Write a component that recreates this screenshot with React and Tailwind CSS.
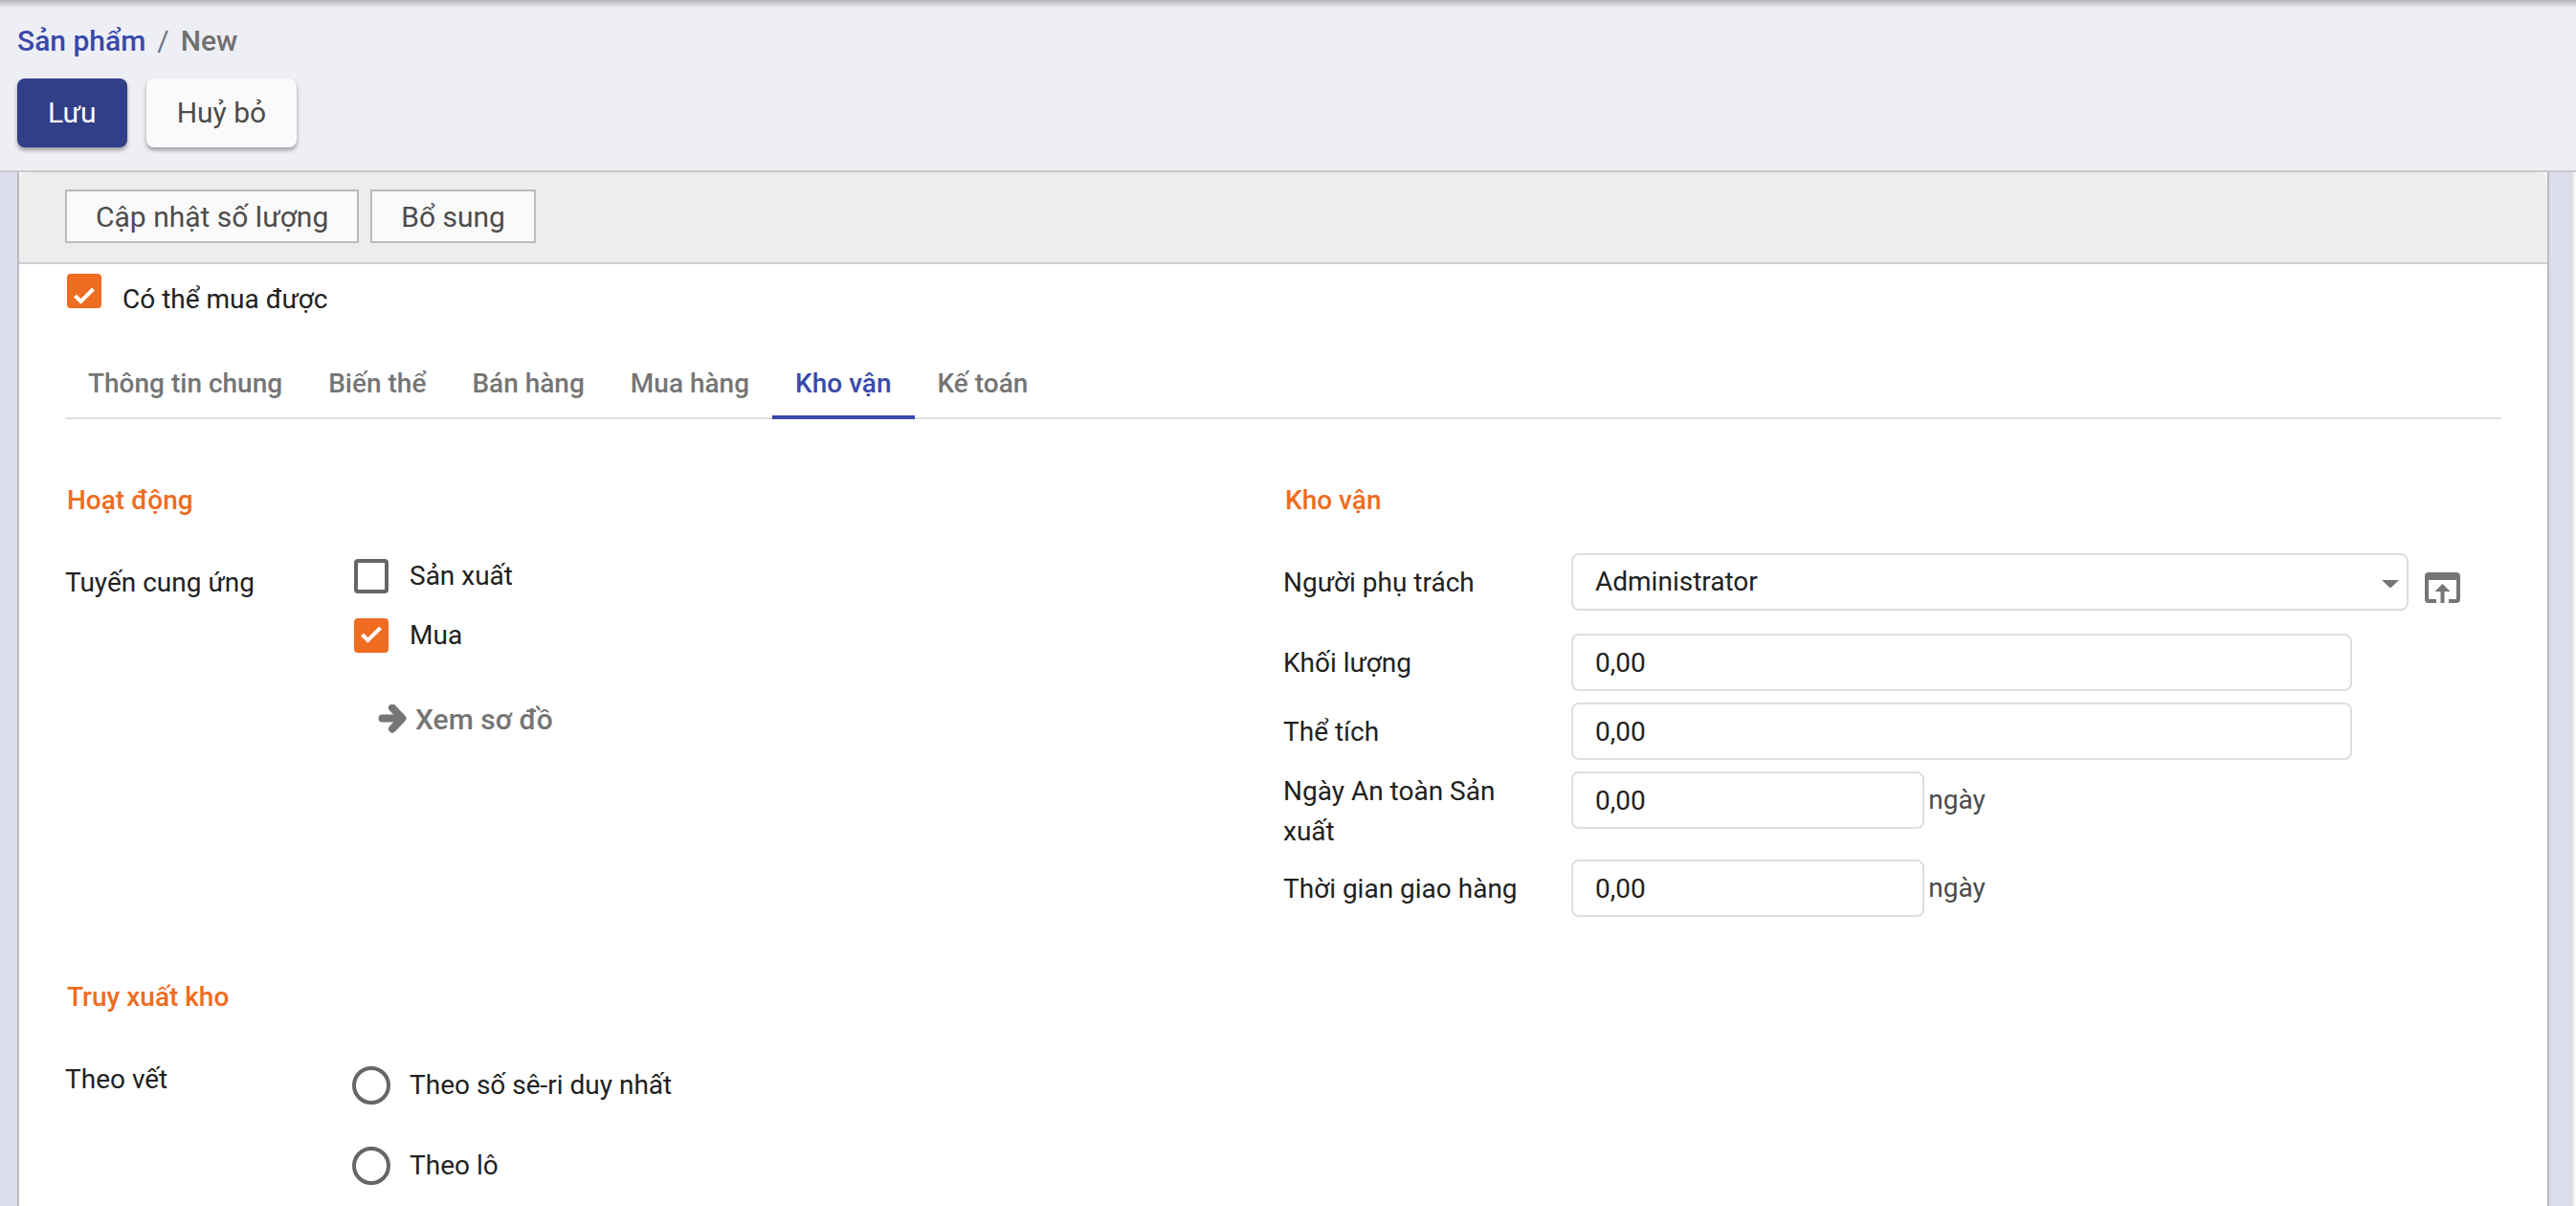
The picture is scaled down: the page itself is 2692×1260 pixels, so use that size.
import React, { useState } from "react";

const TABS = ["Thông tin chung", "Biến thể", "Bán hàng", "Mua hàng", "Kho vận", "Kế toán"];

function Checkbox({ id, label, defaultChecked = false, low = false }) {
  return (
    <label htmlFor={id} className={low ? "flex items-start gap-[22px]" : "flex items-center gap-[22px]"}>
      <span className="relative block size-9 shrink-0">
        <input
          id={id}
          type="checkbox"
          defaultChecked={defaultChecked}
          className="peer block size-9 appearance-none rounded border-4 border-[#666666] bg-white checked:border-[#ef6c20] checked:bg-[#ef6c20]"
        />
        <svg
          viewBox="0 0 36 36"
          className={
            low
              ? "pointer-events-none absolute inset-0 top-1.5 hidden size-9 peer-checked:block"
              : "pointer-events-none absolute inset-0 hidden size-9 peer-checked:block"
          }
        >
          <path d="M8.5 17 14.5 23 27.500 10" fill="none" stroke="#fff" strokeWidth="4" />
        </svg>
      </span>
      <span className={low ? "pt-1.5" : ""}>{label}</span>
    </label>
  );
}

function Radio({ id, label }) {
  return (
    <label htmlFor={id} className="flex items-center gap-5">
      <input
        id={id}
        type="radio"
        name="tracking"
        className="-my-1 block size-10 shrink-0 appearance-none rounded-full border-4 border-[#666666] bg-white checked:border-[#ef6c20]"
      />
      <span>{label}</span>
    </label>
  );
}

function Heading({ children }) {
  return <h2 className="mb-[34px] pl-0.5 font-medium text-[#ef6c20]">{children}</h2>;
}

function NumberRow({ id, label, unit, tall = false }) {
  return (
    <div className="flex items-start">
      <label htmlFor={id} className={tall ? "w-[301px] shrink-0 pr-14 pb-2" : "w-[301px] shrink-0 pt-2.5"}>
        {label}
      </label>
      <div className="flex flex-1 items-center pb-3">
        <input
          id={id}
          type="text"
          defaultValue="0,00"
          className={
            unit
              ? "h-15 w-[38%] rounded-lg border-2 border-[#dedede] bg-white px-[23px]"
              : "h-15 w-[84%] rounded-lg border-2 border-[#dedede] bg-white px-[23px]"
          }
        />
        {unit && <span className="pl-1 text-[#4c4c4c]">{unit}</span>}
      </div>
    </div>
  );
}

export default function App() {
  const [tab, setTab] = useState("Kho vận");
  return (
    <div className="flex h-screen flex-col overflow-hidden bg-[#dbddea] font-[Roboto,sans-serif] text-[28px] leading-[42px] text-[#212121]">
      <header className="border-b-2 border-[#c9c9cb] bg-[#eeeff5]">
        <div className="h-2 bg-linear-to-b from-[#b2b3b7] to-[#eeeff5]" />
        <div className="px-[18px] pt-[14px] pb-6">
          <nav className="flex gap-3 text-[30px] font-medium">
            <a href="#products" className="text-[#3949ab]">Sản phẩm</a>
            <span className="font-normal text-[#6c757d]">/</span>
            <span className="text-[#707070]">New</span>
          </nav>
          <div className="mt-[18px] flex gap-5">
            <button className="h-18 rounded-lg bg-[#303f88] px-8 text-[30px] text-white shadow-[0_3px_4px_rgba(0,0,0,0.35)]">
              Lưu
            </button>
            <button className="h-18 rounded-lg bg-[#fafafa] px-8 text-[30px] text-[#4c4c4c] shadow-[0_3px_4px_rgba(0,0,0,0.35)]">
              Huỷ bỏ
            </button>
          </div>
        </div>
      </header>

      <div className="flex min-h-0 flex-1">
        <main className="mr-6 ml-[18px] flex-1 overflow-hidden border-x-2 border-[#bbbbbd] bg-white">
          <div className="flex gap-3 rounded-t-lg border-b-2 border-[#ccd1d6] bg-[#ededed] px-12 pt-[18px] pb-5">
            <button className="h-14 border-2 border-[#bbbbbb] bg-[#fafafa] px-[30px] pt-0.5 text-[30px] text-[#4c4c4c]">
              Cập nhật số lượng
            </button>
            <button className="h-14 border-2 border-[#bbbbbb] bg-[#fafafa] px-[30px] pt-0.5 text-[30px] text-[#4c4c4c]">
              Bổ sung
            </button>
          </div>

          <div className="px-12 pt-2.5">
            <div className="pl-0.5">
              <Checkbox id="purchase-ok" label="Có thể mua được" defaultChecked low />
            </div>

            <div role="tablist" className="mt-9 flex border-b-2 border-[#dedede]">
              {TABS.map((name) => (
                <button
                  key={name}
                  role="tab"
                  aria-selected={tab === name}
                  onClick={() => setTab(name)}
                  className={
                    tab === name
                      ? "-mb-0.5 border-b-4 border-[#3949ab] px-6 pt-2.5 pb-3 font-medium text-[#3949ab]"
                      : "-mb-0.5 border-b-4 border-transparent px-6 pt-2.5 pb-3 font-medium text-[#757575]"
                  }
                >
                  {name}
                </button>
              ))}
            </div>

            <div className="mt-16 grid grid-cols-2">
              <section>
                <Heading>Hoạt động</Heading>
                <div className="flex items-start">
                  <div className="w-[302px] shrink-0 pt-2.5">Tuyến cung ứng</div>
                  <div className="pt-[3px]">
                    <div className="flex flex-col gap-5">
                      <Checkbox id="route-make" label="Sản xuất" />
                      <Checkbox id="route-buy" label="Mua" defaultChecked />
                    </div>
                    <button className="mt-[46px] ml-6 flex items-center gap-2 text-[30px] font-medium text-[#757575]">
                      <svg viewBox="0 0 32 32" className="size-8">
                        <path
                          d="M5.500 14.500H25M16 3.500 26.500 14.500 16 25.500"
                          fill="none"
                          stroke="currentColor"
                          strokeWidth="8"
                          strokeLinecap="round"
                          strokeLinejoin="round"
                        />
                      </svg>
                      Xem sơ đồ
                    </button>
                  </div>
                </div>
              </section>

              <section>
                <Heading>Kho vận</Heading>
                <div className="flex items-start pb-6">
                  <label htmlFor="responsible" className="w-[301px] shrink-0 pt-2.5">
                    Người phụ trách
                  </label>
                  <div className="flex flex-1 items-center gap-[17px]">
                    <div className="relative w-[90%]">
                      <select
                        id="responsible"
                        className="h-15 w-full appearance-none rounded-lg border-2 border-[#dedede] bg-white px-[23px]"
                      >
                        <option>Administrator</option>
                      </select>
                      <svg viewBox="0 0 18 8" className="pointer-events-none absolute top-7 right-2.5 h-2 w-[18px]">
                        <path d="M0 0H18L10.5 7.3Q9 8.7 7.5 7.3Z" fill="#757575" />
                      </svg>
                    </div>
                    <button aria-label="Open record" className="pt-3 text-[#757575]">
                      <svg viewBox="0 0 37 32" className="h-8 w-[37px]">
                        <path
                          d="M4 0H33Q37 0 37 4V28Q37 32 33 32H25V28H33V8H4V28H12V32H4Q0 32 0 28V4Q0 0 4 0ZM18.500 12 26.500 20H20.500V32H16.500V20H10.500Z"
                          fill="currentColor"
                        />
                      </svg>
                    </button>
                  </div>
                </div>
                <NumberRow id="weight" label="Khối lượng" />
                <NumberRow id="volume" label="Thể tích" />
                <NumberRow id="safety-days" label="Ngày An toàn Sản xuất" unit="ngày" tall />
                <NumberRow id="lead-time" label="Thời gian giao hàng" unit="ngày" />
              </section>

              <section className="mt-[51px]">
                <Heading>Truy xuất kho</Heading>
                <div className="flex items-start">
                  <div className="w-[300px] shrink-0 pt-2.5">Theo vết</div>
                  <div role="radiogroup" aria-label="Theo vết" className="flex flex-col gap-[42px] pt-4">
                    <Radio id="track-serial" label="Theo số sê-ri duy nhất" />
                    <Radio id="track-lot" label="Theo lô" />
                  </div>
                </div>
              </section>
            </div>
          </div>
        </main>
        <div className="w-1 border-l-2 border-[#e6e6e8] bg-[#fafafa]" />
      </div>
    </div>
  );
}
